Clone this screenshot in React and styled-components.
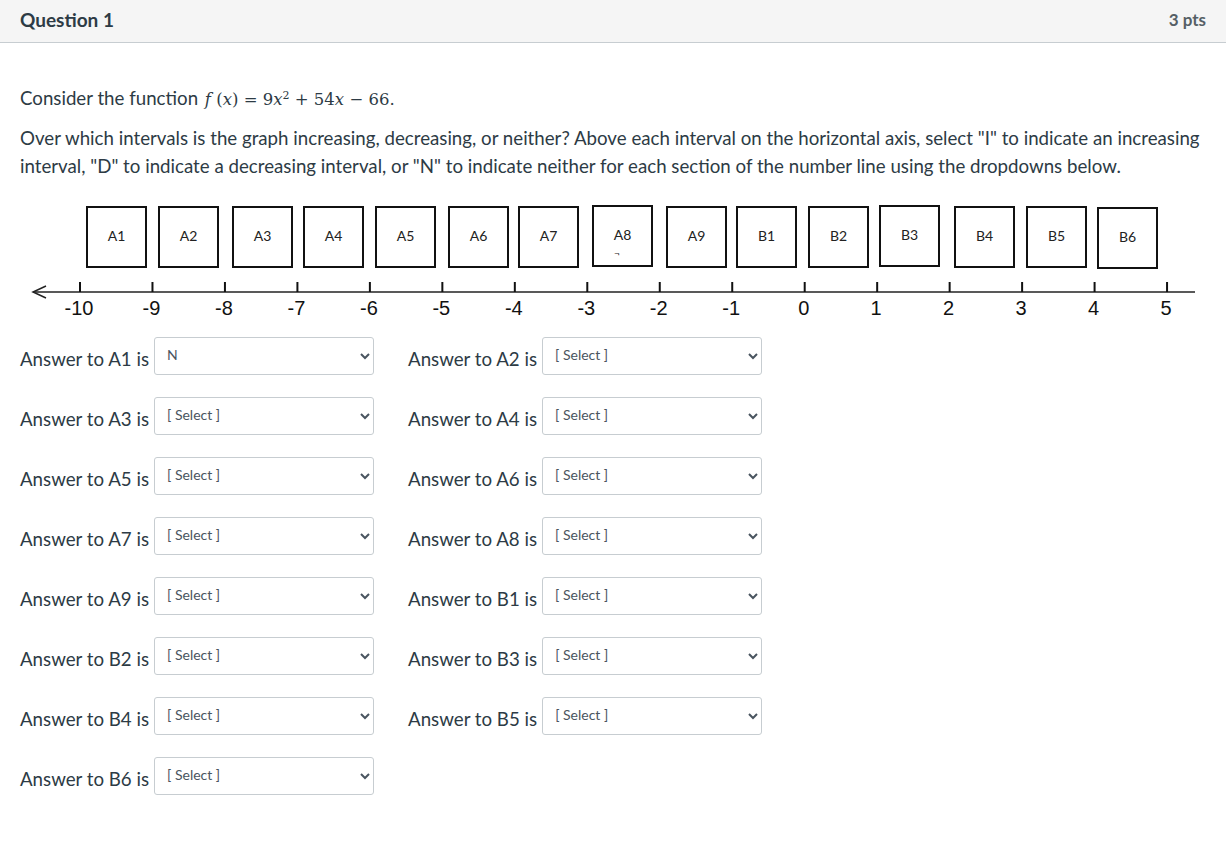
import React from 'react';
import styled, { createGlobalStyle } from 'styled-components';

const GlobalStyle = createGlobalStyle`
  body {
    margin: 0;
    background: #fff;
    font-family: Lato, "Open Sans", sans-serif;
    color: #2d3b45;
  }
`;

const Header = styled.header`
  display: flex;
  justify-content: space-between;
  align-items: center;
  height: 42px;
  padding: 0 20px;
  background: #f5f5f5;
  border-bottom: 1px solid #c7cdd1;

  h2 {
    margin: 0 0 4px;
    font-size: 19px;
    font-weight: 700;
    color: #2d3b45;
  }
`;

const Points = styled.span`
  margin-bottom: 3px;
  font-size: 17px;
  font-weight: 700;
  color: #555f66;
`;

const Content = styled.div`
  padding: 41px 20px 40px;
  font-size: 18.7px;
  line-height: 28px;

  p {
    margin: 0 0 10px;
  }
`;

const Math = styled.span`
  margin-left: 2px;
  font-family: "DejaVu Serif", "Liberation Serif", serif;
  font-size: 16.5px;

  i {
    font-style: italic;
  }

  sup {
    font-size: 11px;
    line-height: 0;
  }
`;

const Diagram = styled.svg`
  display: block;
  margin-top: 20px;
`;

const Answers = styled.div`
  display: flex;
  flex-direction: column;
  gap: 22px;
  margin-top: 15px;
`;

const Row = styled.div`
  display: flex;
  align-items: center;
  gap: 34px;
`;

const Pair = styled.label`
  display: flex;
  align-items: center;
  gap: 5px;
  font-size: 18.7px;
`;

const LabelText = styled.span`
  padding-top: 6px;
`;

const Select = styled.select`
  width: 220px;
  height: 38px;
  padding: 0 6px 3px 8px;
  font-family: Lato, sans-serif;
  font-size: 14px;
  color: #4a5560;
  background: #fff;
  border: 1px solid #c7cdd1;
  border-radius: 3px;
`;

const boxes = [
  ['A1', 87, 207], ['A2', 159, 207], ['A3', 233, 207], ['A4', 304, 207],
  ['A5', 376, 207], ['A6', 449, 207], ['A7', 519, 207], ['A8', 593, 206],
  ['A9', 667, 207], ['B1', 737, 207], ['B2', 809, 207], ['B3', 880, 206],
  ['B4', 955, 207], ['B5', 1027, 207], ['B6', 1098, 208],
];

const ticks = Array.from({ length: 16 }, (_, i) => ({
  x: 80 + 72.47 * i,
  label: String(i - 10),
}));

const rows = [
  ['A1', 'A2'], ['A3', 'A4'], ['A5', 'A6'], ['A7', 'A8'],
  ['A9', 'B1'], ['B2', 'B3'], ['B4', 'B5'], ['B6'],
];

function NumberLine() {
  // page coordinates, shifted by the content offset
  const ox = 20;
  const oy = 200;
  return (
    <Diagram width="1186" height="122" viewBox={`${ox} ${oy} 1186 122`}>
      {boxes.map(([name, x, y]) => (
        <g key={name}>
          <rect x={x} y={y} width="59" height="60" fill="#fff" stroke="#111" strokeWidth="2" />
          <text
            x={x + 29.5}
            y={y + 34}
            textAnchor="middle"
            fontFamily="Lato, sans-serif"
            fontSize="14"
            fill="#222"
          >
            {name}
          </text>
        </g>
      ))}
      <text x="617" y="257" textAnchor="middle" fontFamily="Lato, sans-serif" fontSize="10" fill="#222">¬</text>
      <line x1="33" y1="292" x2="1195" y2="292" stroke="#222" strokeWidth="1.5" />
      <polyline points="46,286 33,292 46,298" fill="none" stroke="#222" strokeWidth="1.5" />
      {ticks.map(t => (
        <g key={t.label}>
          <line x1={t.x} y1="282" x2={t.x} y2="292" stroke="#111" strokeWidth="2" />
          <text
            x={t.x - 1}
            y="315"
            textAnchor="middle"
            fontFamily="Liberation Sans, Arial, sans-serif"
            fontSize="20"
            fill="#111"
          >
            {t.label}
          </text>
        </g>
      ))}
    </Diagram>
  );
}

function Answer({ name, value }) {
  return (
    <Pair>
      <LabelText>Answer to {name} is</LabelText>
      <Select defaultValue={value}>
        <option value="">[ Select ]</option>
        <option value="I">I</option>
        <option value="D">D</option>
        <option value="N">N</option>
      </Select>
    </Pair>
  );
}

export default function App() {
  return (
    <>
      <GlobalStyle />
      <Header>
        <h2>Question 1</h2>
        <Points>3 pts</Points>
      </Header>
      <Content>
        <p>
          Consider the function{' '}
          <Math>
            <i>f</i> (<i>x</i>) = 9<i>x</i><sup>2</sup> + 54<i>x</i> − 66.
          </Math>
        </p>
        <p>
          Over which intervals is the graph increasing, decreasing, or neither? Above each interval on the
          horizontal axis, select "I" to indicate an increasing interval, "D" to indicate a decreasing
          interval, or "N" to indicate neither for each section of the number line using the dropdowns below.
        </p>
        <NumberLine />
        <Answers>
          {rows.map(pair => (
            <Row key={pair[0]}>
              {pair.map(name => (
                <Answer key={name} name={name} value={name === 'A1' ? 'N' : ''} />
              ))}
            </Row>
          ))}
        </Answers>
      </Content>
    </>
  );
}
